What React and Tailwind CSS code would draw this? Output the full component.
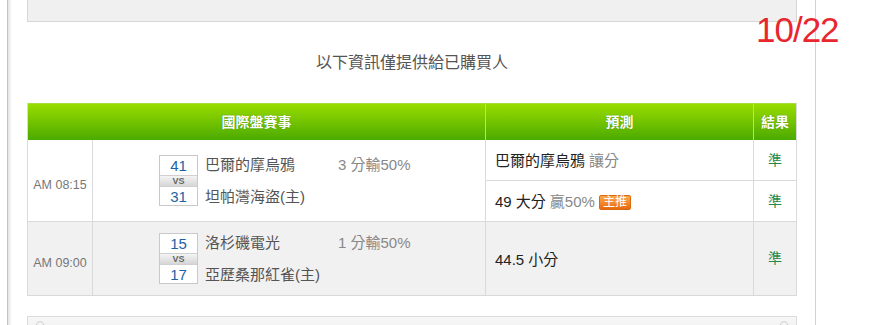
// App.jsx
const font = { fontFamily: '"Liberation Sans", "Noto Sans CJK TC", sans-serif' };

const ScoreBox = ({ home, away }) => (
  <div className="flex flex-col w-[39px] border border-[#c9c9c9] bg-white">
    <div className="h-[19px] flex items-center justify-center text-[15px] text-[#1d62a6] leading-none">
      {home}
    </div>
    <div className="h-[12px] flex items-center justify-center bg-gradient-to-b from-[#f4f4f4] to-[#d6d6d6] border-y border-[#d0d0d0] text-[9px] font-bold text-[#666] leading-none">
      VS
    </div>
    <div className="h-[18px] flex items-center justify-center text-[15px] text-[#1d62a6] leading-none">
      {away}
    </div>
  </div>
);

const Match = ({ home, away, teamA, teamB, spread }) => (
  <div className="w-[393px] border-r border-[#dadada] flex items-center pl-[66px]">
    <ScoreBox home={home} away={away} />
    <div className="flex flex-col ml-[7px] w-[133px] gap-[13px] text-[15px] text-[#555] leading-[19px]">
      <span>{teamA}</span>
      <span>{teamB}</span>
    </div>
    <div className="flex flex-col self-center -mt-[32px] text-[15px] text-[#888] leading-[19px]">
      {spread}
    </div>
  </div>
);

const Hit = () => (
  <div className="flex-1 flex items-center justify-center text-[14px] text-[#1e8a4c]">準</div>
);

export default function App() {
  return (
    <div className="w-[881px] h-[325px] overflow-hidden bg-white flex relative" style={font}>
      {/* left rail */}
      <div className="w-[7px] shrink-0" />
      <div className="w-[5px] shrink-0 border-l border-[#c4c4c4] bg-gradient-to-r from-[#e4e4e4] to-white" />

      {/* page */}
      <div className="w-[804px] shrink-0 border-r border-[#d2d2d2] pl-[15px] pr-[18px] flex flex-col">
        {/* top panel */}
        <div className="h-[22px] shrink-0 bg-[#f0f0f0] border-x border-b border-[#d6d6d6]" />

        <div className="h-[81px] shrink-0 flex items-center justify-center text-[16px] text-[#555]">
          以下資訊僅提供給已購買人
        </div>

        {/* table */}
        <div className="shrink-0 border-x border-b border-[#d9d9d9]">
          <div className="h-[37px] flex border-t border-[#a6dc3c] bg-gradient-to-b from-[#98dc00] to-[#4aaa00] text-white font-bold text-[14px] [text-shadow:0_0_1px_rgba(0,60,0,0.5)]">
            <div className="w-[458px] border-r border-[#b4e46c] flex items-center justify-center">國際盤賽事</div>
            <div className="w-[268px] border-r border-[#b4e46c] flex items-center justify-center">預測</div>
            <div className="flex-1 flex items-center justify-center">結果</div>
          </div>

          {/* row 1 */}
          <div className="h-[82px] flex border-b border-[#dadada] bg-white">
            <div className="w-[65px] border-r border-[#dadada] flex items-center justify-center pt-[10px] text-[12.5px] text-[#777]">
              AM 08:15
            </div>
            <Match home="41" away="31" teamA="巴爾的摩烏鴉" teamB="坦帕灣海盜(主)" spread="3 分輸50%" />
            <div className="w-[268px] border-r border-[#dadada] flex flex-col">
              <div className="h-[41px] border-b border-[#dadada] flex items-center pl-[9px] pt-[2px] text-[15px] text-[#222]">
                巴爾的摩烏鴉<span className="ml-[4px] text-[#888]">讓分</span>
              </div>
              <div className="flex-1 flex items-center pl-[9px] pt-[2px] text-[15px] text-[#222]">
                49 大分<span className="ml-[4px] text-[#888]">贏50%</span>
                <span className="ml-[4px] h-[15px] px-[3px] flex items-center rounded-[2px] border border-[#d8690e] bg-gradient-to-b from-[#fba84a] to-[#e8690c] text-white text-[12px] leading-none">
                  主推
                </span>
              </div>
            </div>
            <div className="flex-1 flex flex-col">
              <div className="h-[41px] border-b border-[#dadada] flex">
                <Hit />
              </div>
              <div className="flex-1 flex">
                <Hit />
              </div>
            </div>
          </div>

          {/* row 2 */}
          <div className="h-[73px] flex bg-[#f1f1f1]">
            <div className="w-[65px] border-r border-[#dadada] flex items-center justify-center pt-[9px] text-[12.5px] text-[#777]">
              AM 09:00
            </div>
            <Match home="15" away="17" teamA="洛杉磯電光" teamB="亞歷桑那紅雀(主)" spread="1 分輸50%" />
            <div className="w-[268px] border-r border-[#dadada] flex items-center pl-[9px] pt-[3px] text-[15px] text-[#222]">
              44.5 小分
            </div>
            <Hit />
          </div>
        </div>

        {/* next panel */}
        <div className="mt-[20px] h-[20px] shrink-0 border-x border-t border-[#dcdcdc] bg-gradient-to-b from-[#f7f7f7] to-[#efefef] flex justify-between px-[8px] pt-[4px]">
          <span className="w-[8px] h-[8px] rounded-full border border-[#d0d0d0]" />
          <span className="w-[8px] h-[8px] rounded-full border border-[#d0d0d0]" />
        </div>
      </div>

      {/* date */}
      <div className="absolute left-[756px] top-[12px] text-[35px] leading-[35px] tracking-[-1px] text-[#e8262e]">
        10/22
      </div>
    </div>
  );
}
